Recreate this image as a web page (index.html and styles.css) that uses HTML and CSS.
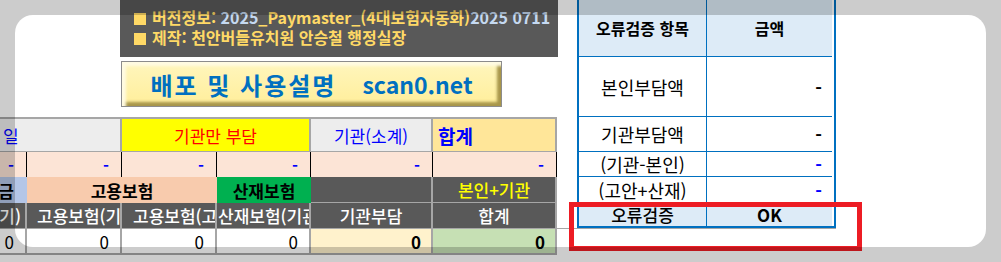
FILE: index.html
```html
<!DOCTYPE html>
<html lang="ko">
<head>
  <meta charset="UTF-8">
  <title>4대보험 자동화</title>
  <link rel="stylesheet" href="styles.css">
</head>
<body>
  <div class="sheet">
    <div class="left">
      <div class="info">
        <p><span class="sq"></span>버전정보: <span class="ver">2025</span>_Paymaster_(4대보험자동화)<span class="ver">2025 0711</span></p>
        <p><span class="sq"></span>제작: 천안버들유치원 안승철 행정실장</p>
      </div>
      <div class="guide">배포 및 사용설명<span class="site">scan0.net</span></div>

      <div class="grid">
        <!-- 1행: 구분 -->
        <div class="cell r1 light span2 tail-left"><span class="blue">일</span></div>
        <div class="cell r1 yellow span2"><span class="red">기관만 부담</span></div>
        <div class="cell r1 light"><span class="blue">기관(소계)</span></div>
        <div class="cell r1 amber sum-head">합계</div>

        <!-- 2행: 합계 금액 -->
        <div class="cell r2 num">-</div>
        <div class="cell r2 num">-</div>
        <div class="cell r2 num">-</div>
        <div class="cell r2 num">-</div>
        <div class="cell r2 num">-</div>
        <div class="cell r2 num">-</div>

        <!-- 3행: 보험 구분 -->
        <div class="cell r3 pension clip-end"><span>국민연금</span></div>
        <div class="cell r3 employ span2">고용보험</div>
        <div class="cell r3 accident">산재보험</div>
        <div class="cell r3 dark"></div>
        <div class="cell r3 dark gold">본인+기관</div>

        <!-- 4행: 세부 항목 -->
        <div class="cell r4 clip-end"><span>국민연금(기)</span></div>
        <div class="cell r4 clip-start pad10"><span>고용보험(기관)</span></div>
        <div class="cell r4 clip-start pad11"><span>고용보험(고용안정)</span></div>
        <div class="cell r4 clip-start pad1"><span>산재보험(기관)</span></div>
        <div class="cell r4 gold">기관부담</div>
        <div class="cell r4 gold">합계</div>

        <!-- 5행: 금액 -->
        <div class="cell r5 num">0</div>
        <div class="cell r5 num">0</div>
        <div class="cell r5 num">0</div>
        <div class="cell r5 num">0</div>
        <div class="cell r5 num bold cream">0</div>
        <div class="cell r5 num bold green">0</div>
      </div>
    </div>

    <div class="check">
      <div class="check-grid">
        <div class="ck head">오류검증 항목</div>
        <div class="ck head">금액</div>
        <div class="ck item">본인부담액</div>
        <div class="ck val">-</div>
        <div class="ck item">기관부담액</div>
        <div class="ck val">-</div>
        <div class="ck item">(기관-본인)</div>
        <div class="ck val blue">-</div>
        <div class="ck item">(고안+산재)</div>
        <div class="ck val blue">-</div>
        <div class="ck foot">오류검증</div>
        <div class="ck foot ok">OK</div>
      </div>
    </div>
  </div>

  <div class="mark"></div>
  <div class="focus"></div>
</body>
</html>
```

FILE: styles.css
```css
body {
  margin: 0;
  background: #fff;
  font-family: "Noto Sans CJK KR", "Noto Sans", sans-serif;
  color: #000;
  overflow: hidden;
}
.sheet {
  display: flex;
  align-items: flex-start;
}
.left {
  width: 557px;
}

/* 상단 정보 상자 */
.info {
  margin-left: 120px;
  width: 438px;
  height: 57px;
  box-sizing: border-box;
  padding: 8px 0 0 14px;
  background: #595959;
  color: #ffd966;
  font-size: 16px;
  font-weight: bold;
  overflow: hidden;
}
.info p {
  margin: 0;
  line-height: 19.5px;
  white-space: nowrap;
}
.sq {
  display: inline-block;
  width: 12px;
  height: 12px;
  background: #ffd966;
  margin-right: 6px;
  vertical-align: -1px;
}
.ver {
  color: #c5d9f1;
}

/* 사용설명 버튼 */
.guide {
  margin: 4px 0 0 121px;
  width: 381px;
  height: 46px;
  box-sizing: border-box;
  display: flex;
  align-items: center;
  justify-content: center;
  background: linear-gradient(#fff6bd, #ffee9a);
  border: 1px solid #8c8c8c;
  box-shadow: inset 4px 4px 3px #fffbe2, inset -4px -4px 3px #a8964a;
  color: #0070c0;
  font-size: 24px;
  font-weight: bold;
  letter-spacing: 2px;
}
.site {
  margin-left: 26px;
  font-size: 23px;
  letter-spacing: 0;
}

/* 보험료 표 */
.grid {
  margin-top: 10px;
  display: grid;
  grid-template-columns: 27px 95px 95px 94px 122px 124px;
  grid-template-rows: 35px 25px 26px 26px 26px;
}
.cell {
  box-sizing: border-box;
  display: flex;
  align-items: center;
  justify-content: center;
  overflow: hidden;
  white-space: nowrap;
  font-size: 16px;
  line-height: 1;
}
.span2 {
  grid-column: span 2;
}
.r1 {
  border-top: 2px solid #a6a6a6;
  border-bottom: 1px solid #a6a6a6;
  border-right: 2px solid #a6a6a6;
  font-size: 17px;
}
.light { background: #ededed; }
.yellow { background: #ffff00; }
.amber { background: #ffe699; }
.blue { color: #0000ff; }
.red { color: #ff0000; }
.tail-left {
  justify-content: flex-start;
  padding-left: 3px;
}
.sum-head {
  justify-content: flex-start;
  padding-left: 5px;
  color: #0000ff;
  font-weight: bold;
  font-size: 19px;
}

.num {
  justify-content: flex-end;
  padding-right: 11px;
}
.r2 {
  background: #fce4d6;
  border-right: 1px solid #000;
  color: #0000ff;
  padding-right: 12px;
  font-weight: bold;
}
.r2:last-child { border-right-color: #a6a6a6; }

.r3 {
  font-weight: bold;
  font-size: 17px;
}
.pension { background: #b4c6e7; }
.employ { background: #f8cbad; }
.accident { background: #00b050; }
.dark {
  background: #595959;
  border-right: 2px solid #a6a6a6;
  border-bottom: 1px solid #a6a6a6;
}
.gold {
  color: #ffff00;
  font-weight: 500;
}
.clip-end {
  justify-content: flex-end;
  padding-right: 13px;
}
.clip-start {
  justify-content: flex-start;
}
.pad10 { padding-left: 10px; }
.pad11 { padding-left: 11px; }
.pad1 { padding-left: 1px; }

.r4 {
  background: #595959;
  color: #fff;
  border-right: 2px solid #a6a6a6;
  border-bottom: 1px solid #a6a6a6;
  font-size: 17px;
  font-weight: 500;
}
.r4.clip-end { padding-right: 4px; }

.r5 {
  background: #fff;
  border-right: 2px solid #a6a6a6;
  border-bottom: 2px solid #a6a6a6;
  font-size: 17px;
}
.bold { font-weight: bold; padding-right: 10px; }
.cream { background: #fff2cc; }
.green { background: #c6e0b4; }

/* 오류검증 표 */
.check {
  width: 279px;
  padding-left: 20px;
  box-sizing: border-box;
  border-bottom: 1px solid #a6a6a6;
}
.check-grid {
  display: grid;
  grid-template-columns: 128px 125px;
  grid-template-rows: 57px 60px 35px 25px 26px 23px;
  border: 2px solid #0070c0;
  border-top: none;
}
.ck {
  box-sizing: border-box;
  display: flex;
  align-items: center;
  justify-content: center;
  white-space: nowrap;
  border-bottom: 1px solid #0070c0;
  font-size: 18px;
  line-height: 1;
}
.ck:nth-child(odd) {
  border-right: 1px solid #0070c0;
}
.head {
  background: #ddebf7;
  font-weight: bold;
  font-size: 16px;
}
.val {
  justify-content: flex-end;
  padding-right: 10px;
  font-weight: bold;
  font-size: 18px;
}
.foot {
  background: #ddebf7;
  border-bottom: none;
  font-size: 17px;
  font-weight: 500;
}
.ok {
  font-weight: bold;
  font-size: 17px;
}

/* 강조 표시 */
.mark {
  position: absolute;
  left: 569px;
  top: 202px;
  width: 293px;
  height: 49px;
  box-sizing: border-box;
  border: 5px solid #ed1c24;
}
.focus {
  position: absolute;
  left: 15px;
  top: 15px;
  width: 971px;
  height: 232px;
  border-radius: 18px;
  box-shadow: 0 0 0 600px rgba(0, 0, 0, 0.2);
  pointer-events: none;
}
```
